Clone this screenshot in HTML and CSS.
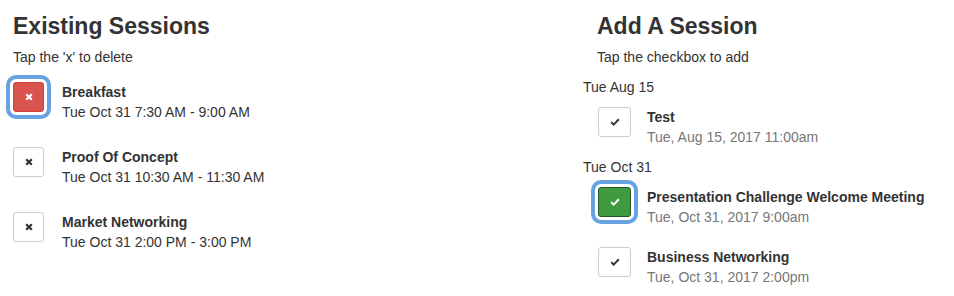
FILE: index.html
```html
<!DOCTYPE html>
<html>
<head>
<meta charset="utf-8">
<link rel="stylesheet" href="styles.css">
</head>
<body>
<div class="page">
  <section class="col col-left">
    <h2 class="title">Existing Sessions</h2>
    <p class="hint">Tap the 'x' to delete</p>
    <ul class="list list-existing">
      <li class="row">
        <button class="box box-x danger focus" aria-label="delete">
          <svg viewBox="0 0 10 10" width="8" height="8"><path d="M1.5 1.5 L8.5 8.5 M8.5 1.5 L1.5 8.5" stroke="#fff" stroke-width="2.8" stroke-linecap="butt"/></svg>
        </button>
        <div class="info"><div class="name">Breakfast</div><div class="when">Tue Oct 31 7:30 AM - 9:00 AM</div></div>
      </li>
      <li class="row">
        <button class="box box-x" aria-label="delete">
          <svg viewBox="0 0 10 10" width="8" height="8"><path d="M1.5 1.5 L8.5 8.5 M8.5 1.5 L1.5 8.5" stroke="#333" stroke-width="2.8" stroke-linecap="butt"/></svg>
        </button>
        <div class="info"><div class="name">Proof Of Concept</div><div class="when">Tue Oct 31 10:30 AM - 11:30 AM</div></div>
      </li>
      <li class="row">
        <button class="box box-x" aria-label="delete">
          <svg viewBox="0 0 10 10" width="8" height="8"><path d="M1.5 1.5 L8.5 8.5 M8.5 1.5 L1.5 8.5" stroke="#333" stroke-width="2.8" stroke-linecap="butt"/></svg>
        </button>
        <div class="info"><div class="name">Market Networking</div><div class="when">Tue Oct 31 2:00 PM - 3:00 PM</div></div>
      </li>
    </ul>
  </section>
  <section class="col col-right">
    <h2 class="title indent">Add A Session</h2>
    <p class="hint indent">Tap the checkbox to add</p>
    <div class="group">
      <div class="day">Tue Aug 15</div>
      <ul class="list list-add">
        <li class="row">
          <button class="box box-check" aria-label="add">
            <svg viewBox="0 0 12 10" width="10" height="8"><path d="M1.2 5.2 L4.3 8.2 L10.8 1.6" fill="none" stroke="#333" stroke-width="2.4"/></svg>
          </button>
          <div class="info"><div class="name">Test</div><div class="when muted">Tue, Aug 15, 2017 11:00am</div></div>
        </li>
      </ul>
    </div>
    <div class="group">
      <div class="day">Tue Oct 31</div>
      <ul class="list list-add">
        <li class="row">
          <button class="box box-check success focus" aria-label="add">
            <svg viewBox="0 0 12 10" width="10" height="8"><path d="M1.2 5.2 L4.3 8.2 L10.8 1.6" fill="none" stroke="#fff" stroke-width="2.4"/></svg>
          </button>
          <div class="info"><div class="name">Presentation Challenge Welcome Meeting</div><div class="when muted">Tue, Oct 31, 2017 9:00am</div></div>
        </li>
        <li class="row">
          <button class="box box-check" aria-label="add">
            <svg viewBox="0 0 12 10" width="10" height="8"><path d="M1.2 5.2 L4.3 8.2 L10.8 1.6" fill="none" stroke="#333" stroke-width="2.4"/></svg>
          </button>
          <div class="info"><div class="name">Business Networking</div><div class="when muted">Tue, Oct 31, 2017 2:00pm</div></div>
        </li>
      </ul>
    </div>
  </section>
</div>
</body>
</html>
```

FILE: styles.css
```css
* { box-sizing: border-box; }

html, body {
  margin: 0;
  padding: 0;
  background: #fff;
}

body {
  font-family: "Liberation Sans", Arial, Helvetica, sans-serif;
  font-size: 14px;
  line-height: 20px;
  color: #333;
}

.page {
  display: grid;
  grid-template-columns: 570px 1fr;
  padding: 13px 0 0 13px;
}

.title {
  margin: 0;
  font-size: 23px;
  line-height: 26px;
  font-weight: 700;
  color: #333;
}

.hint {
  margin: 8px 0 0;
}

.indent {
  padding-left: 14px;
}

.list {
  list-style: none;
  margin: 0;
  padding: 0;
  display: flex;
  flex-direction: column;
}

.list-existing {
  margin-top: 15px;
  gap: 25px;
}

.row {
  display: flex;
  align-items: flex-start;
}

.info {
  display: flex;
  flex-direction: column;
}

.name {
  font-weight: 700;
}

.when.muted {
  color: #777;
}

.box {
  display: flex;
  align-items: center;
  justify-content: center;
  height: 30px;
  padding: 0;
  margin: 0;
  background: #fff;
  border: 1px solid #ccc;
  border-radius: 3px;
  flex: none;
}

.box-x {
  width: 31px;
  margin-right: 18px;
}

.box-check {
  width: 33px;
  margin-right: 16px;
}

.danger {
  background: #d9534f;
  border-color: #d43f3a;
}

.success {
  background: #3f9b3f;
  border-color: #255625;
}

.focus {
  outline: 4px solid #68a2e2;
  outline-offset: 3px;
}

.group {
  margin-top: 10px;
}

.day {
  margin-bottom: 10px;
}

.list-add {
  padding-left: 15px;
  gap: 20px;
}
```
